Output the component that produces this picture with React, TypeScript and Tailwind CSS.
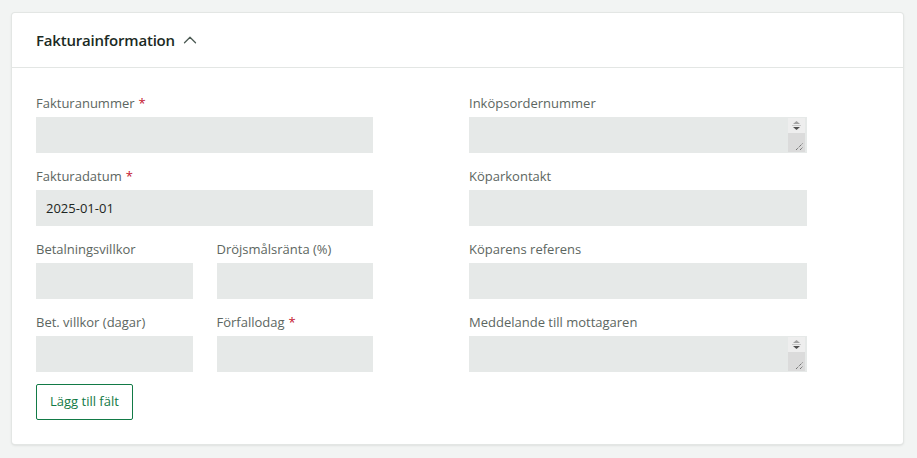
import { ChevronUp } from 'lucide-react';

const font = { fontFamily: '"Open Sans", "Noto Sans", sans-serif' };

const Label = ({ text, required }: { text: string; required?: boolean }) => (
  <div className="mb-1 h-5 text-[13px] leading-5 text-[#5c6661] whitespace-nowrap">
    {text}
    {required && <span className="ml-1 text-[#c4132d]">*</span>}
  </div>
);

const Input = ({ value }: { value?: string }) => (
  <input
    readOnly
    value={value ?? ''}
    className="block h-9 w-full bg-[#e6e9e8] px-[10px] text-[13px] text-[#1d2622] outline-none"
  />
);

const TextArea = () => (
  <div className="relative h-9 w-full bg-[#e6e9e8]">
    <textarea readOnly className="block h-9 w-full resize-none bg-transparent px-[10px] outline-none" />
    {/* scrollbar + resize grip */}
    <div className="absolute right-[2px] top-[1px] flex h-[34px] w-[17px] flex-col">
      <div className="flex h-[15px] flex-col items-center justify-center bg-[#eeeeee]">
        <svg width="11" height="11" viewBox="0 0 11 11">
          <path d="M2 4 L5.5 1 L9 4 Z" fill="#a3a3a3" />
          <rect x="1" y="5" width="9" height="1" fill="#c8c8c8" />
          <path d="M2 7 L5.5 10 L9 7 Z" fill="#505050" />
        </svg>
      </div>
      <div className="relative flex-1 bg-[#dbdbdb]">
        <svg className="absolute bottom-[1px] right-[1px]" width="9" height="9" viewBox="0 0 9 9">
          <path d="M1 8 L8 1 M5 8 L8 5" stroke="#4a4a4a" strokeWidth="1" strokeDasharray="1 1" />
        </svg>
      </div>
    </div>
  </div>
);

const Field = ({ label, required, value, area }: { label: string; required?: boolean; value?: string; area?: boolean }) => (
  <div>
    <Label text={label} required={required} />
    {area ? <TextArea /> : <Input value={value} />}
  </div>
);

export default function App() {
  return (
    <div className="min-h-[458px] bg-[#f2f4f3] pl-3 pr-[14px] pt-[13px] pb-3" style={font}>
      <div className="rounded-[3px] bg-white shadow-[0_0_0_1px_#e3e6e4,0_1px_3px_rgba(0,0,0,0.16)]">
        <div className="flex h-[55px] items-center gap-1 border-b border-[#e3e6e4] px-6">
          <h2 className="text-[15px] font-semibold tracking-[-0.2px] text-[#1b2a23]">Fakturainformation</h2>
          <ChevronUp size={22} strokeWidth={1.4} className="text-[#4b5a53]" />
        </div>
        <div className="px-6 pt-[25px] pb-6">
          <div className="grid grid-cols-[337px_338px] gap-x-[96px] gap-y-[13px]">
            <Field label="Fakturanummer" required />
            <Field label="Inköpsordernummer" area />
            <Field label="Fakturadatum" required value="2025-01-01" />
            <Field label="Köparkontakt" />
            <div className="grid grid-cols-2 gap-x-6">
              <Field label="Betalningsvillkor" />
              <Field label="Dröjsmålsränta (%)" />
            </div>
            <Field label="Köparens referens" />
            <div className="grid grid-cols-2 gap-x-6">
              <Field label="Bet. villkor (dagar)" />
              <Field label="Förfallodag" required />
            </div>
            <Field label="Meddelande till mottagaren" area />
          </div>
          <button className="mt-3 h-9 rounded-[2px] border border-[#127a46] px-[13px] text-[13px] text-[#127a46]">
            Lägg till fält
          </button>
        </div>
      </div>
    </div>
  );
}
